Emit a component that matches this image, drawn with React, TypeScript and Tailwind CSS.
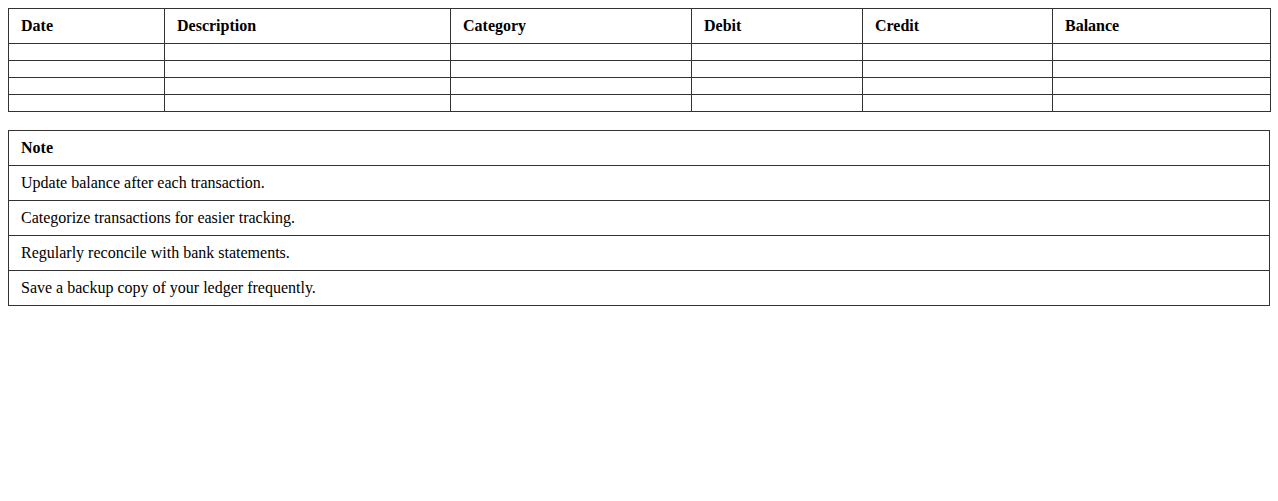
const headers = [
  { label: 'Date', w: 'w-[156px]' },
  { label: 'Description', w: 'w-[286px]' },
  { label: 'Category', w: 'w-[241px]' },
  { label: 'Debit', w: 'w-[171px]' },
  { label: 'Credit', w: 'w-[190px]' },
  { label: 'Balance', w: 'w-[218px]' },
];

const notes = [
  'Update balance after each transaction.',
  'Categorize transactions for easier tracking.',
  'Regularly reconcile with bank statements.',
  'Save a backup copy of your ledger frequently.',
];

export default function App() {
  return (
    <div className="min-h-[501px] bg-white p-2 text-[16px] leading-[18px] text-black [font-family:'Liberation_Serif','Times_New_Roman',serif]">
      {/* ledger */}
      <table className="w-full table-fixed border-collapse">
        <thead>
          <tr>
            {headers.map((h) => (
              <th key={h.label} className={`${h.w} border border-[#333] px-3 py-2 text-left font-bold`}>
                {h.label}
              </th>
            ))}
          </tr>
        </thead>
        <tbody>
          {[0, 1, 2, 3].map((r) => (
            <tr key={r}>
              {headers.map((h) => (
                <td key={h.label} className="h-[17px] border border-[#333] px-3 py-0"></td>
              ))}
            </tr>
          ))}
        </tbody>
      </table>

      {/* notes */}
      <table className="mt-[18px] w-full border-collapse">
        <thead>
          <tr>
            <th className="border border-[#333] px-3 py-2 text-left font-bold">Note</th>
          </tr>
        </thead>
        <tbody>
          {notes.map((n) => (
            <tr key={n}>
              <td className="border border-[#333] px-3 py-2">{n}</td>
            </tr>
          ))}
        </tbody>
      </table>
    </div>
  );
}
